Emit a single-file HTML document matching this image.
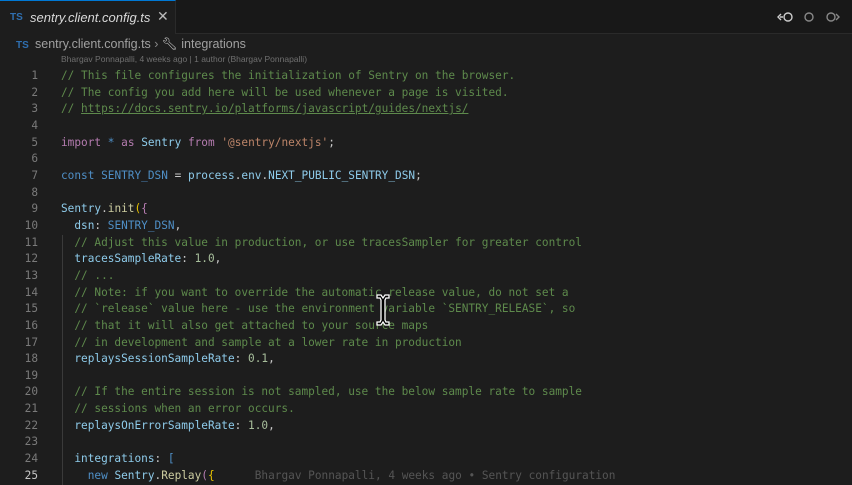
<!DOCTYPE html>
<html><head><meta charset="utf-8"><style>
*{margin:0;padding:0;box-sizing:border-box}
body{width:852px;height:480px;background:#1d1d1d;overflow:hidden;position:relative;font-family:"Liberation Sans",sans-serif}
.tabbar{position:absolute;left:0;top:0;width:852px;height:34px;background:#181818;border-bottom:1px solid #2a2a2a}
.tab{position:absolute;left:0;top:0;width:176px;height:34px;background:#1d1d1d;border-top:1px solid #0078d4;border-right:1px solid #2a2a2a}
.ts{color:#2f6fb0;font-weight:bold;font-size:10px;position:absolute}
.tabt{position:absolute;left:30px;top:9px;font-size:13px;font-style:italic;color:#d8d8d8}
.x{position:absolute;left:157px;top:7px;color:#bbb;font-size:14px}
.bc{position:absolute;top:37px;left:35px;font-size:12.5px;color:#a0a0a0}
.blame{position:absolute;top:54px;left:61px;font-size:8.5px;color:#707070}
.code{position:absolute;left:0;top:68px;font-family:"DejaVu Sans Mono","Liberation Mono",monospace;font-size:11.1px}
.l{height:16.67px;line-height:16.67px;white-space:pre;position:relative}
.n{display:inline-block;width:38px;text-align:right;color:#7a7a7a;margin-right:23px}
.c{color:#5e8a4c}.k{color:#b57cb0}.v{color:#8ecbea}.b{color:#4f8fc6}.s{color:#bd8569}.f{color:#cccca0}.m{color:#a8bf9c}.w{color:#c8c8c8}.y{color:#e6c200}.u{text-decoration:underline}
.guide{position:absolute;left:62px;top:235px;width:1px;height:250px;background:#3a3a3a}
</style></head><body>
<div class="tabbar">
 <div class="tab"><span class="ts" style="left:10px;top:11px">TS</span><span class="tabt">sentry.client.config.ts</span><span class="x">✕</span></div>
 <svg style="position:absolute;left:776px;top:9px" width="76" height="16" fill="none" stroke="#ccc" stroke-width="1.4"><path d="M7 8h-3M5 5l-3 3 3 3"/><circle cx="12" cy="8" r="4"/><circle cx="33" cy="8" r="4" stroke="#888"/><circle cx="55" cy="8" r="4" stroke="#888"/><path d="M60 5l3 3-3 3" stroke="#888"/></svg>
</div>
<span class="ts" style="left:16px;top:40px">TS</span>
<div class="bc">sentry.client.config.ts <span style="color:#888">›</span> <span style="color:#ccc">🔧︎</span> integrations</div>
<div class="blame">Bhargav Ponnapalli, 4 weeks ago | 1 author (Bhargav Ponnapalli)</div>
<div class="guide"></div>
<div class="code">
<div class="l"><span class="n">1</span><span class="c">// This file configures the initialization of Sentry on the browser.</span></div>
<div class="l"><span class="n">2</span><span class="c">// The config you add here will be used whenever a page is visited.</span></div>
<div class="l"><span class="n">3</span><span class="c">// <span class="u">https://docs.sentry.io/platforms/javascript/guides/nextjs/</span></span></div>
<div class="l"><span class="n">4</span></div>
<div class="l"><span class="n">5</span><span class="k">import</span> <span class="b">*</span> <span class="k">as</span> <span class="v">Sentry</span> <span class="k">from</span> <span class="s">'@sentry/nextjs'</span><span class="w">;</span></div>
<div class="l"><span class="n">6</span></div>
<div class="l"><span class="n">7</span><span class="b">const</span> <span class="b">SENTRY_DSN</span> <span class="w">=</span> <span class="v">process</span><span class="w">.</span><span class="v">env</span><span class="w">.</span><span class="v">NEXT_PUBLIC_SENTRY_DSN</span><span class="w">;</span></div>
<div class="l"><span class="n">8</span></div>
<div class="l"><span class="n">9</span><span class="v">Sentry</span><span class="w">.</span><span class="f">init</span><span class="y">(</span><span class="k">{</span></div>
<div class="l"><span class="n">10</span>  <span class="v">dsn</span><span class="w">:</span> <span class="b">SENTRY_DSN</span><span class="w">,</span></div>
<div class="l"><span class="n">11</span>  <span class="c">// Adjust this value in production, or use tracesSampler for greater control</span></div>
<div class="l"><span class="n">12</span>  <span class="v">tracesSampleRate</span><span class="w">:</span> <span class="m">1.0</span><span class="w">,</span></div>
<div class="l"><span class="n">13</span>  <span class="c">// ...</span></div>
<div class="l"><span class="n">14</span>  <span class="c">// Note: if you want to override the automatic release value, do not set a</span></div>
<div class="l"><span class="n">15</span>  <span class="c">// `release` value here - use the environment variable `SENTRY_RELEASE`, so</span></div>
<div class="l"><span class="n">16</span>  <span class="c">// that it will also get attached to your source maps</span></div>
<div class="l"><span class="n">17</span>  <span class="c">// in development and sample at a lower rate in production</span></div>
<div class="l"><span class="n">18</span>  <span class="v">replaysSessionSampleRate</span><span class="w">:</span> <span class="m">0.1</span><span class="w">,</span></div>
<div class="l"><span class="n">19</span></div>
<div class="l"><span class="n">20</span>  <span class="c">// If the entire session is not sampled, use the below sample rate to sample</span></div>
<div class="l"><span class="n">21</span>  <span class="c">// sessions when an error occurs.</span></div>
<div class="l"><span class="n">22</span>  <span class="v">replaysOnErrorSampleRate</span><span class="w">:</span> <span class="m">1.0</span><span class="w">,</span></div>
<div class="l"><span class="n">23</span></div>
<div class="l"><span class="n">24</span>  <span class="v">integrations</span><span class="w">:</span> <span class="b">[</span></div>
<div class="l"><span class="n" style="color:#c6c6c6">25</span>    <span class="b">new</span> <span class="v">Sentry</span><span class="w">.</span><span class="f">Replay</span><span class="k">(</span><span class="y">{</span>      <span style="color:#555">Bhargav Ponnapalli, 4 weeks ago • Sentry configuration</span></div>
</div>
<svg style="position:absolute;left:375px;top:293px" width="16" height="34"><path d="M2 2h4l2 3 2-3h4v3h-3l-1 2v20l1 2h3v3h-4l-2-3-2 3H2v-3h3l1-2V7L5 5H2z" fill="#000" stroke="#fff" stroke-width="1.3"/></svg>
</body></html>
